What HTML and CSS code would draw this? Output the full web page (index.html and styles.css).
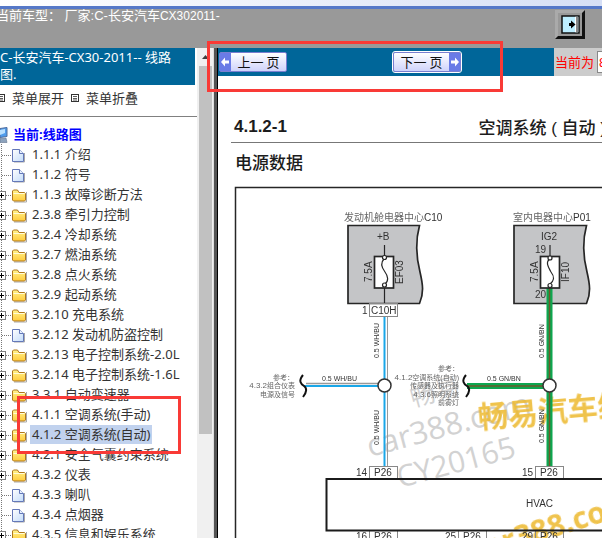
FILE: index.html
```html
<!DOCTYPE html>
<html lang="zh-CN">
<head>
<meta charset="utf-8">
<title>C-长安汽车-CX30-2011 线路图</title>
<link rel="stylesheet" href="styles.css">
</head>
<body>
<svg class="sprites" aria-hidden="true">
  <defs>
    <linearGradient id="gold" x1="0" y1="0" x2="0" y2="1"><stop offset="0" stop-color="#fff48e"/><stop offset="1" stop-color="#ffcb3c"/></linearGradient>
    <linearGradient id="paper" x1="0" y1="0" x2="1" y2="1"><stop offset="0" stop-color="#fff"/><stop offset="1" stop-color="#c3dcfa"/></linearGradient>
    <symbol id="plus" viewBox="0 0 12 20">
      <path d="M1.5 0V20M6 11.5H12" stroke="#777" stroke-dasharray="1 1" fill="none"/>
      <rect x="-2.500" y="7.500" width="8" height="8" fill="#fff" stroke="#808080"/>
      <path d="M-1 11.500H4M1.500 9V14" stroke="#000" fill="none"/>
    </symbol>
    <symbol id="branch" viewBox="0 0 12 20">
      <path d="M1.5 0V20M2 11.5H12" stroke="#777" stroke-dasharray="1 1" fill="none"/>
    </symbol>
    <symbol id="folder" viewBox="0 0 15 20">
      <path d="M2 18H14.500V8" stroke="#aaa" fill="none"/>
      <path d="M.5 16V7L1.500 6H5.500L7 8.500H12.500L13.500 9.500V16L12.500 17H1.500Z" fill="url(#gold)" stroke="#b0781c"/>
      <path d="M1.500 9.500H12.500" stroke="#fffbd8"/>
    </symbol>
    <symbol id="page" viewBox="0 0 15 20">
      <path d="M2 18H12.500V9" stroke="#aaa" fill="none"/>
      <path d="M.5 5.500H7.500L11.500 9.500V17.500H.5Z" fill="url(#paper)" stroke="#6478b8"/>
      <path d="M7.500 5.500V9.500H11.500" fill="#e8f1ff" stroke="#6478b8"/>
    </symbol>
    <symbol id="list" viewBox="0 0 8 8">
      <rect x=".5" y=".5" width="7" height="7" fill="#fff" stroke="#333"/>
      <path d="M2 2.500H6M2 4.500H6M2 6H6" stroke="#333" stroke-width=".8"/>
    </symbol>
  </defs>
</svg>

<div class="window-edge"></div>
<header class="topbar">
  <span class="model">当前车型： 厂家:C-长安汽车<span class="code-name">CX302011-</span></span>
  <button class="exit" type="button" aria-label="退出">
    <svg width="19" height="19" viewBox="0 0 19 19">
      <rect x="1" y="1" width="17" height="17" fill="#bdeeff" stroke="#111" stroke-width="1.500"/>
      <path d="M14 1.800H17.200V17.200H14Z" fill="#fff"/>
      <path d="M16 2V17" stroke="#111"/>
      <path d="M8 8H10V5.500L14.500 9.500L10 13.500V11H8Z" fill="#000"/>
    </svg>
  </button>
</header>

<div class="workspace">
  <aside class="sidebar">
    <h1 class="side-title">C-长安汽车-CX30-2011-- 线路图.</h1>
    <nav class="side-actions">
      <svg class="bullet" viewBox="0 0 8 8"><use href="#list"/></svg><a href="#open">菜单展开</a>
      <svg class="bullet" viewBox="0 0 8 8"><use href="#list"/></svg><a href="#close">菜单折叠</a>
    </nav>
    <div class="root">
      <svg class="monitor" viewBox="0 0 10 20"><path d="M0 4.500L7 3.500V12.500L0 13.500Z" fill="#4f9cec" stroke="#4f6c9d"/><path d="M0 6L5 5V9L0 11Z" fill="#b9e0ff"/><path d="M0 14.500L6 14L7 18.500H0Z" fill="#8da3bd" stroke="#63758f" stroke-width=".6"/></svg>
      <a href="#root">当前:线路图</a>
    </div>
    <ul class="tree">
      <li><svg class="joint"><use href="#branch"/></svg><svg class="kind"><use href="#page"/></svg><a href="#s">1.1.1 介绍</a></li>
      <li><svg class="joint"><use href="#branch"/></svg><svg class="kind"><use href="#page"/></svg><a href="#s">1.1.2 符号</a></li>
      <li><svg class="joint"><use href="#plus"/></svg><svg class="kind"><use href="#folder"/></svg><a href="#s">1.1.3 故障诊断方法</a></li>
      <li><svg class="joint"><use href="#plus"/></svg><svg class="kind"><use href="#folder"/></svg><a href="#s">2.3.8 牵引力控制</a></li>
      <li><svg class="joint"><use href="#plus"/></svg><svg class="kind"><use href="#folder"/></svg><a href="#s">3.2.4 冷却系统</a></li>
      <li><svg class="joint"><use href="#plus"/></svg><svg class="kind"><use href="#folder"/></svg><a href="#s">3.2.7 燃油系统</a></li>
      <li><svg class="joint"><use href="#plus"/></svg><svg class="kind"><use href="#folder"/></svg><a href="#s">3.2.8 点火系统</a></li>
      <li><svg class="joint"><use href="#plus"/></svg><svg class="kind"><use href="#folder"/></svg><a href="#s">3.2.9 起动系统</a></li>
      <li><svg class="joint"><use href="#plus"/></svg><svg class="kind"><use href="#folder"/></svg><a href="#s">3.2.10 充电系统</a></li>
      <li><svg class="joint"><use href="#branch"/></svg><svg class="kind"><use href="#page"/></svg><a href="#s">3.2.12 发动机防盗控制</a></li>
      <li><svg class="joint"><use href="#plus"/></svg><svg class="kind"><use href="#folder"/></svg><a href="#s">3.2.13 电子控制系统-2.0L</a></li>
      <li><svg class="joint"><use href="#plus"/></svg><svg class="kind"><use href="#folder"/></svg><a href="#s">3.2.14 电子控制系统-1.6L</a></li>
      <li><svg class="joint"><use href="#plus"/></svg><svg class="kind"><use href="#folder"/></svg><a href="#s">3.3.1 自动变速器</a></li>
      <li><svg class="joint"><use href="#plus"/></svg><svg class="kind"><use href="#folder"/></svg><a href="#s">4.1.1 空调系统(手动)</a></li>
      <li><svg class="joint"><use href="#plus"/></svg><svg class="kind"><use href="#folder"/></svg><a class="selected" href="#s">4.1.2 空调系统(自动)</a></li>
      <li><svg class="joint"><use href="#plus"/></svg><svg class="kind"><use href="#folder"/></svg><a href="#s">4.2.1 安全气囊约束系统</a></li>
      <li><svg class="joint"><use href="#plus"/></svg><svg class="kind"><use href="#folder"/></svg><a href="#s">4.3.2 仪表</a></li>
      <li><svg class="joint"><use href="#branch"/></svg><svg class="kind"><use href="#page"/></svg><a href="#s">4.3.3 喇叭</a></li>
      <li><svg class="joint"><use href="#branch"/></svg><svg class="kind"><use href="#page"/></svg><a href="#s">4.3.4 点烟器</a></li>
      <li><svg class="joint"><use href="#plus"/></svg><svg class="kind"><use href="#folder"/></svg><a href="#s">4.3.5 信息和娱乐系统</a></li>
    </ul>
  </aside>
  <div class="scrollbar">
    <svg class="up" viewBox="0 0 13 18"><path d="M3 11L6.500 7L10 11Z" fill="#404040"/></svg>
    <div class="thumb"></div>
    <div class="track"></div>
  </div>
  <div class="splitter"></div>

  <main class="content">
    <div class="toolbar">
      <div class="pager">
        <button class="page-btn prev" type="button"><svg class="arrow" viewBox="0 0 11 18"><path d="M1 9L5 4.500V7.500H9V10.500H5V13.500Z" fill="#fff"/></svg><span>上一 页</span></button>
        <button class="page-btn next" type="button"><span>下一 页</span><svg class="arrow" viewBox="0 0 11 18"><path d="M10 9L6 4.500V7.500H2V10.500H6V13.500Z" fill="#fff"/></svg></button>
      </div>
      <div class="current">
        <label for="page-no">当前为</label>
        <input id="page-no" type="text" value="8">
      </div>
    </div>
    <article class="document">
      <div class="doc-head"><b>4.1.2-1</b><span>空调系统 ( 自动 )</span></div>
      <h2>电源数据</h2>
      <svg class="diagram" width="384" height="354" viewBox="218 184 384 354" role="img" aria-label="空调系统电源线路图">
        <path d="M640 187.500H235.500V560" fill="none" stroke="#262626" stroke-width="1.500"/>

        <g class="mark-grey">
          <text transform="translate(413 407) rotate(-15)" font-size="25">畅易</text>
          <text transform="translate(370 457) rotate(-15)" font-size="31">car388.com</text>
          <text transform="translate(400 488) rotate(-15)" font-size="30">CY20165</text>
        </g>
        <g class="mark-gold">
          <text transform="translate(479 428) rotate(-5)" font-size="30">畅易汽车维修</text>
          <text transform="translate(473 562) rotate(-17)" font-size="30">car388.com</text>
        </g>

        <g fill="#c4c5c7" stroke="#262626" stroke-width="1.700">
          <path d="M419.500 225.500H348V303.500H419.500C424 293 423 285 420 272C416 256 415 242 419.500 225.500Z"/>
          <path d="M586.500 225.500H514V303.500H586.500C591 293 590 285 587 272C583 256 582 242 586.500 225.500Z"/>
        </g>

        <g fill="none">
          <path d="M387.500 316V466" stroke="#999"/><path d="M384.500 316V466" stroke="#1aa7e8" stroke-width="2"/>
          <path d="M306 383.500H384" stroke="#999" stroke-width="1.500"/><path d="M304 386H384" stroke="#1aa7e8" stroke-width="2"/>
          <path d="M549.500 288V466M467 386H549" stroke="#0da64f" stroke-width="6"/>
          <path d="M549.500 288V466M467 386H549" stroke="#6c5a2c" stroke-width="1.500"/>
        </g>

        <g fill="#fff" stroke="#262626" stroke-width="1.700">
          <rect x="374.500" y="256.500" width="19" height="31.500"/>
          <rect x="540.500" y="256.500" width="19" height="31.500"/>
        </g>
        <g fill="none" stroke="#262626" stroke-width="1.200">
          <path d="M384.500 245V256M384.500 288V303M384 259C380 263 382 268 385 272C388 276 389 281 385 284"/>
          <path d="M550 245V256M549.500 259C545 263 549 268 551 272C555 277 554 281 550 284"/>
          <g fill="#fff"><circle cx="384.500" cy="257.500" r="2"/><circle cx="384.500" cy="285" r="2"/><circle cx="550" cy="258" r="2"/><circle cx="550" cy="285.500" r="2"/></g>
        </g>
        <g fill="#fff" stroke="#333" stroke-width="1.500">
          <circle cx="384.500" cy="385.500" r="6.500"/><circle cx="549.500" cy="385.500" r="6.500"/>
        </g>
        <g fill="none" stroke="#111" stroke-width="2">
          <path d="M303 375C298 381 301 384 304 386C307 388 307 392 303 397"/>
          <path d="M466 375C461 381 464 384 467 386C470 388 470 392 466 397"/>
        </g>

        <g fill="none" stroke="#888">
          <rect x="369.500" y="303.500" width="28" height="13"/>
          <rect x="369.500" y="466.500" width="28" height="13"/><rect x="535.500" y="466.500" width="28" height="13"/>
          <rect x="369.500" y="530.500" width="28" height="13"/><rect x="458.500" y="530.500" width="28" height="13"/><rect x="535.500" y="530.500" width="28" height="13"/>
        </g>
        <path d="M640 479H326.500V530.500H640" fill="none" stroke="#1b1b1b" stroke-width="2"/>

        <g class="label" font-size="10">
          <text x="377" y="240">+B</text><text x="541" y="240">IG2</text>
          <text x="535" y="253">19</text><text x="535" y="298">20</text>
          <text x="362" y="314">1</text><text x="371" y="314">C10H</text>
          <text x="356" y="476">14</text><text x="374" y="476">P26</text>
          <text x="522" y="476">15</text><text x="540" y="476">P26</text>
          <text x="356" y="540">16</text><text x="374" y="540">P26</text>
          <text x="445" y="540">25</text><text x="463" y="540">P26</text>
          <text x="522" y="540">29</text><text x="540" y="540">P26</text>
          <text x="526" y="507">HVAC</text>
          <text transform="translate(372 282) rotate(-90)">7.5A</text><text transform="translate(403 284) rotate(-90)">EF03</text>
          <text transform="translate(538 282) rotate(-90)">7.5A</text><text transform="translate(569 282) rotate(-90)">IF10</text>
        </g>
        <g class="label" font-size="7">
          <text x="322" y="381">0.5 WH/BU</text><text x="487" y="381">0.5 GN/BN</text>
          <text transform="translate(379 358) rotate(-90)">0.5 WH/BU</text><text transform="translate(379 445) rotate(-90)">0.5 WH/BU</text>
          <text transform="translate(544 358) rotate(-90)">0.5 GN/BN</text><text transform="translate(544 443) rotate(-90)">0.5 GN/BN</text>
        </g>
        <g class="label place" font-size="10">
          <text x="344" y="221">发动机舱电器中心<tspan class="code">C10</tspan></text>
          <text x="513" y="221">室内电器中心<tspan class="code">P01</tspan></text>
        </g>
        <g class="label refs" font-size="7" text-anchor="end">
          <text x="294" y="380">参考：</text><text x="295" y="388"><tspan class="num">4.3.2</tspan>组合仪表</text><text x="295" y="397">电源及信号</text>
          <text x="459" y="371">参考：</text><text x="459" y="380"><tspan class="num">4.1.2</tspan>空调系统(自动)</text><text x="459" y="388">传感器及执行器</text><text x="459" y="397"><tspan class="num">4.3.6</tspan>照明系统</text><text x="459" y="405">前雾灯</text>
        </g>
      </svg>
    </article>
  </main>
</div>
<div class="highlight highlight-pager"></div>
<div class="highlight highlight-tree"></div>
</body>
</html>
```
FILE: styles.css
```css
* { box-sizing: border-box; }

body {
  margin: 0;
  height: 100vh;
  display: flex;
  flex-direction: column;
  overflow: hidden;
  position: relative;
  background: #fff;
  color: #333;
  font: 13px/20px "Noto Sans", "Noto Sans CJK SC", sans-serif;
}

a { color: inherit; text-decoration: none; white-space: nowrap; }
svg { flex: none; display: block; }
.sprites { position: absolute; width: 0; height: 0; }

.window-edge {
  flex: none;
  height: 9px;
  background: linear-gradient(90deg, #fff, #d6dff5);
  border-bottom: 3px solid #5578c8;
}

.topbar {
  flex: none;
  height: 39px;
  display: flex;
  justify-content: space-between;
  align-items: flex-start;
  padding: 1px 17px 0 0;
  background: #999;
  color: #fff;
}
.model {
  margin-left: -4px;
  line-height: 12px;
  white-space: nowrap;
  font-family: "Liberation Sans", "Noto Sans CJK SC", sans-serif;
}
.code-name { font-size: 12px; }
.exit {
  width: 30px;
  height: 29px;
  padding: 0;
  display: grid;
  place-items: center;
  background: #999;
  border: 3px solid;
  border-color: #aaa #111 #111 #aaa;
}

.workspace { flex: 1; min-height: 0; display: flex; }

.sidebar { flex: none; width: 197px; overflow: hidden; }
.side-title {
  margin: 0 2px 0 0;
  padding: 1px 10px 2px 0;
  background: #069;
  color: #fff;
  font-size: 13px;
  font-weight: 400;
  line-height: 17px;
}
.side-actions {
  height: 32px;
  padding-bottom: 5px;
  border-bottom: 1px solid #808080;
  display: flex;
  align-items: center;
  gap: 7px;
}
.bullet { width: 8px; height: 8px; }
.bullet:first-child { margin-left: -3px; }
.root {
  display: flex;
  height: 20px;
  margin-top: 7px;
  gap: 3px;
  color: #00f;
  font-weight: 700;
}
.monitor { width: 10px; height: 20px; }

.tree { margin: 0; padding: 0; list-style: none; }
.tree li { display: flex; align-items: center; height: 20px; }
.joint { width: 12px; height: 20px; }
.kind { width: 15px; height: 20px; }
.tree a { margin-left: 3px; padding: 0 2px; line-height: 19px; }
.tree .selected { background: #c1d2ee; }

.scrollbar {
  flex: none;
  width: 16px;
  padding: 0 1px 0 2px;
  display: flex;
  flex-direction: column;
  background: #f0f0f0;
}
.up { width: 13px; height: 18px; }
.thumb { flex: 368; background: #c1c1c1; }
.track { flex: 104; }
.splitter {
  flex: none;
  width: 5px;
  background: #555;
  border-left: 1px solid #ddd;
  border-right: 1px solid #000;
}

.content { flex: 1; min-width: 0; display: flex; flex-direction: column; overflow: hidden; }
.toolbar { flex: none; display: flex; height: 28px; }
.pager {
  flex: 1;
  display: flex;
  align-items: center;
  gap: 106px;
  padding-left: 1px;
  background: #069;
}
.page-btn {
  width: 68px;
  height: 20px;
  padding: 0;
  display: flex;
  align-items: stretch;
  border: 1px solid #7a7fd0;
  border-radius: 2px;
  background: linear-gradient(#fff, #cfd3fb);
  color: #111;
  font: 13px/17px "Noto Sans CJK SC", sans-serif;
}
.next { outline: 1px solid #fff; }
.page-btn span { flex: 1; text-align: center; white-space: nowrap; }
.arrow { width: 11px; height: 18px; background: #6a7be6; }
.current {
  flex: none;
  width: 48px;
  overflow: hidden;
  display: flex;
  align-items: center;
  gap: 3px;
  padding-left: 1px;
  background: #ccc;
  color: #f00;
}
.current label { flex: none; }
.current input {
  flex: none;
  width: 40px;
  height: 22px;
  padding: 0 1px;
  border: 1px solid #888;
  color: #f00;
  font: 13px "Liberation Sans", sans-serif;
}

.document {
  flex: 1;
  min-height: 0;
  padding-top: 39px;
  color: #1c1c1c;
  font: 17px/24px "Liberation Sans", "Noto Sans CJK SC", sans-serif;
}
.doc-head {
  display: flex;
  justify-content: space-between;
  height: 28px;
  margin-left: 13px;
  padding-left: 3px;
  border-bottom: 1px solid #777;
  white-space: nowrap;
}
.doc-head b { line-height: 24px; }
.doc-head span { font-weight: 500; line-height: 28px; margin-right: -4px; }
h2 { margin: 9px 0 8px 17px; font-size: 17px; font-weight: 500; line-height: 24px; }
.diagram { overflow: hidden; }

.label { fill: #333; font-family: "Liberation Sans", "Noto Sans CJK SC", sans-serif; }
.place, .refs { fill: #666; }
.code { fill: #333; }
.num { font-size: 8px; }
.mark-grey { fill: #d2d2d2; font-family: "Open Sans", "Noto Sans CJK SC", sans-serif; }
.mark-gold { fill: #edb92e; opacity: .85; font-family: "Open Sans", "Noto Sans CJK SC", sans-serif; font-weight: 700; }

.highlight { position: absolute; border: 3px solid #f93a36; pointer-events: none; }
.highlight-pager { left: 207px; top: 41px; width: 296px; height: 51px; }
.highlight-tree { left: 17px; top: 396px; width: 164px; height: 58px; }
```
